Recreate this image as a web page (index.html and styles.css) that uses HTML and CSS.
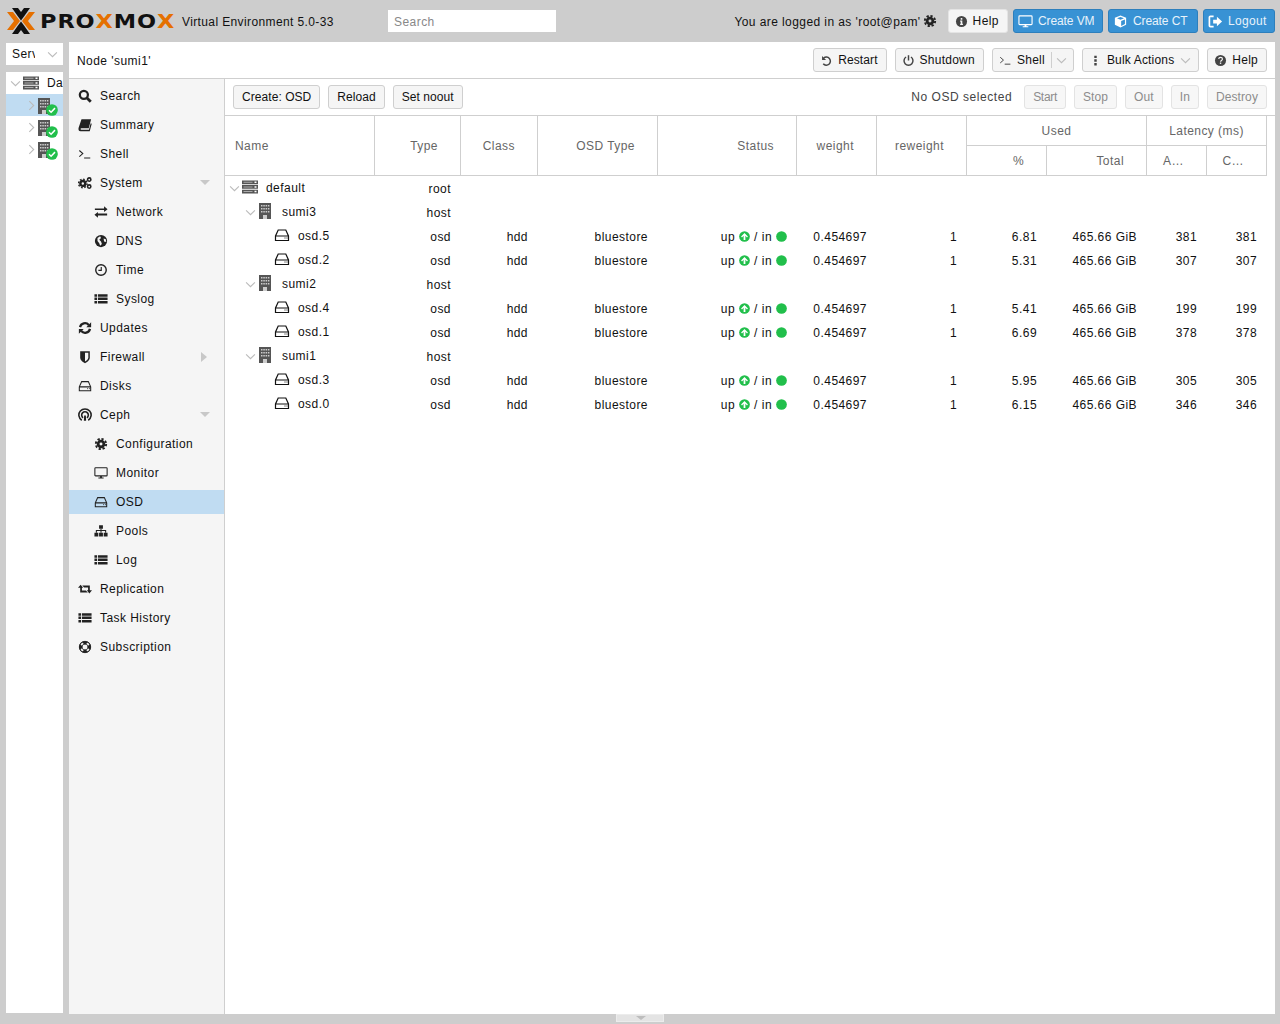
FILE: index.html
```html
<!DOCTYPE html>
<html lang="en">
<head>
  <meta charset="UTF-8">
  <title>sumi1 - Proxmox Virtual Environment</title>
  <link rel="stylesheet" href="styles.css">
</head>
<body>

<svg class="sprite" xmlns="http://www.w3.org/2000/svg">
  <symbol id="i-search" viewBox="0 0 16 16"><circle cx="6.700" cy="6.700" r="4.600" fill="none" stroke="currentColor" stroke-width="2.600"/><path d="M10 10l4.600 4.600" stroke="currentColor" stroke-width="3.200"/></symbol>
  <symbol id="i-book" viewBox="0 0 16 16"><path d="M4 1.500h11l-2.700 10.300H3.800c-1.200 0-1.200 1.700 0 1.700H12.500l2-7.500 1.200.6-2.300 8.400H3c-2.300 0-2.800-2-2.300-4z" fill="currentColor"/></symbol>
  <symbol id="i-term" viewBox="0 0 16 16"><path d="M1.500 4l4 3.500-4 3.500M7 12.500h7" fill="none" stroke="currentColor" stroke-width="1.200"/></symbol>
  <symbol id="i-cogs" viewBox="0 0 16 16"><circle cx="5.500" cy="8.500" r="2.800" fill="none" stroke="currentColor" stroke-width="2.800"/><circle cx="5.500" cy="8.500" r="4.900" fill="none" stroke="currentColor" stroke-width="1.600" stroke-dasharray="2 1.800"/><circle cx="12.800" cy="4" r="1.900" fill="none" stroke="currentColor" stroke-width="1.800"/><circle cx="12.800" cy="12" r="1.900" fill="none" stroke="currentColor" stroke-width="1.800"/></symbol>
  <symbol id="i-exchange" viewBox="0 0 16 16"><path d="M1 4h10.500V1.500l4 3.300-4 3.200V5.800H1zM15 9.800H4.500V8l-4 3.200 4 3.300v-2.600H15z" fill="currentColor"/></symbol>
  <symbol id="i-globe" viewBox="0 0 16 16"><circle cx="8" cy="8" r="7" fill="currentColor"/><path d="M4 4.500l3-2 1 2-2 2 2 2 1 3-2 2-1-3-2-2.500zM11 5l2.500 1 .5 3-2.500-.5z" fill="#f5f5f5"/></symbol>
  <symbol id="i-clock" viewBox="0 0 16 16"><circle cx="8" cy="8" r="6" fill="none" stroke="currentColor" stroke-width="1.600"/><path d="M8.300 4.500v4H5" fill="none" stroke="currentColor" stroke-width="1.300"/></symbol>
  <symbol id="i-list" viewBox="0 0 16 16"><path d="M.5 2.500h3v2.800h-3zM4.500 2.500h11v2.800h-11zM.5 6.400h3v2.800h-3zM4.500 6.400h11v2.800h-11zM.5 10.300h3v2.800h-3zM4.500 10.300h11v2.800h-11z" fill="currentColor"/></symbol>
  <symbol id="i-refresh" viewBox="0 0 16 16"><path d="M2.300 7A5.800 5.800 0 0 1 12.300 4.500M13.700 9A5.800 5.800 0 0 1 3.700 11.500" fill="none" stroke="currentColor" stroke-width="2.600"/><path d="M15 1.500V7H9.500zM1 14.500V9h5.500z" fill="currentColor"/></symbol>
  <symbol id="i-shield" viewBox="0 0 16 16"><path d="M2.500 1.500h11v7c0 3.200-3.200 5.300-5.500 6.500-2.300-1.200-5.500-3.300-5.500-6.500z" fill="currentColor"/><path d="M8 3.200h3.800v5.300c0 2.200-2.200 3.700-3.800 4.600z" fill="#f5f5f5"/></symbol>
  <symbol id="i-hdd" viewBox="0 0 16 16"><path d="M4.200 3h7.600l2.700 6v4.500h-13V9zM1.500 9h13" fill="none" stroke="currentColor" stroke-width="1.200"/><path d="M10.500 11h1M12.500 11h1" stroke="currentColor"/></symbol>
  <symbol id="i-ceph" viewBox="0 0 16 16"><path d="M4.300 14a7 7 0 1 1 7.400 0M5.800 11.200a3.800 3.800 0 1 1 4.400 0" fill="none" stroke="currentColor" stroke-width="1.800"/><path d="M6.700 14.500l.3-6h2l.3 6z" fill="currentColor"/></symbol>
  <symbol id="i-gear" viewBox="0 0 16 16"><circle cx="8" cy="8" r="3.300" fill="none" stroke="currentColor" stroke-width="3.200"/><circle cx="8" cy="8" r="5.900" fill="none" stroke="currentColor" stroke-width="2.200" stroke-dasharray="2.600 2"/></symbol>
  <symbol id="i-desktop" viewBox="0 0 16 16"><rect x="1" y="2" width="14" height="9.300" rx=".8" fill="none" stroke="currentColor" stroke-width="1.200"/><path d="M7 11.500h2v1.700H7zM5 13h6v1.200H5z" fill="currentColor"/></symbol>
  <symbol id="i-sitemap" viewBox="0 0 16 16"><path d="M5.800 1.500h4.400v4H5.800zM.5 10h4.400v4.200H.5zM5.800 10h4.400v4.200H5.800zM11.100 10h4.400v4.200h-4.400z" fill="currentColor"/><path d="M2.700 10V7.500h10.600V10M8 5.500V10" fill="none" stroke="currentColor" stroke-width="1.200"/></symbol>
  <symbol id="i-retweet" viewBox="0 0 16 16"><path d="M0 6.500l3-3.500 3 3.500H4.500v3.200H9l2.200 2.300H2.500V6.500zM16 9.500L13 13l-3-3.500h1.500V6.300H7L4.800 4h8.700v5.500z" fill="currentColor"/></symbol>
  <symbol id="i-life" viewBox="0 0 16 16"><circle cx="8" cy="8" r="5" fill="none" stroke="currentColor" stroke-width="3.800"/><path d="M3.800 3.800l2.500 2.500M12.200 3.800L9.700 6.300M3.800 12.200l2.500-2.500M12.200 12.200L9.700 9.700" stroke="#f5f5f5" stroke-width="3"/><circle cx="8" cy="8" r="6.500" fill="none" stroke="currentColor" stroke-width=".9"/><circle cx="8" cy="8" r="3.400" fill="none" stroke="currentColor" stroke-width=".9"/></symbol>
  <symbol id="i-undo" viewBox="0 0 16 16"><path d="M4.500 5A5 5 0 1 1 4 12" fill="none" stroke="currentColor" stroke-width="1.800"/><path d="M2.500 2.500v5h5z" fill="currentColor"/></symbol>
  <symbol id="i-power" viewBox="0 0 16 16"><path d="M5 3.700a5.500 5.500 0 1 0 6 0" fill="none" stroke="currentColor" stroke-width="1.800"/><path d="M8 1.500v6.500" stroke="currentColor" stroke-width="1.800"/></symbol>
  <symbol id="i-dots" viewBox="0 0 16 16"><path d="M6.500 2h3v3h-3zM6.500 6.500h3v3h-3zM6.500 11h3v3h-3z" fill="currentColor"/></symbol>
  <symbol id="i-question" viewBox="0 0 16 16"><circle cx="8" cy="8" r="6.800" fill="currentColor"/><path d="M5.800 6.300c0-2.800 4.600-2.800 4.600 0 0 1.700-2.300 1.700-2.300 3.200" fill="none" stroke="#f5f5f5" stroke-width="1.400"/><path d="M7.200 10.500h1.700v1.700H7.200z" fill="#f5f5f5"/></symbol>
  <symbol id="i-info" viewBox="0 0 16 16"><circle cx="8" cy="8" r="6.800" fill="currentColor"/><path d="M7 3.700h2v2H7zM6.300 6.800H9v4h.8v1.400H6.300v-1.400H7V8.200h-.7z" fill="#f5f5f5"/></symbol>
  <symbol id="i-cube" viewBox="0 0 16 16"><path d="M8 1.500l6 2.400v7.600l-6 3-6-3V3.900z" fill="currentColor"/><path d="M8 3.100l3.700 1.500L8 6.100 4.300 4.600zM8.700 7.400l4-1.600v4.900l-4 2z" fill="#3892d4"/></symbol>
  <symbol id="i-signout" viewBox="0 0 16 16"><path d="M6 2.500H2.500a1 1 0 0 0-1 1v9a1 1 0 0 0 1 1H6" fill="none" stroke="currentColor" stroke-width="1.800"/><path d="M5.500 6h4V3l5.500 5-5.500 5v-3h-4z" fill="currentColor"/></symbol>
  <symbol id="i-up" viewBox="0 0 16 16"><circle cx="8" cy="8" r="7.800" fill="#21bf4b"/><path d="M8 2.800L13 8l-1.400 1.300-2.300-2.400V13H6.700V6.900L4.400 9.300 3 8z" fill="#fff"/></symbol>
  <symbol id="i-in" viewBox="0 0 16 16"><circle cx="8" cy="8" r="7.800" fill="#21bf4b"/></symbol>
  <symbol id="i-check" viewBox="0 0 16 16"><circle cx="8" cy="8" r="7.800" fill="#21bf4b"/><path d="M4 8.300l2.800 2.700L12 5.500" fill="none" stroke="#fff" stroke-width="2"/></symbol>
  <symbol id="i-server" viewBox="0 0 18 16"><path d="M1 1.500h16v3.700H1zM1 6.100h16v3.700H1zM1 10.700h16v3.700H1z" fill="#555"/><path d="M2.500 2.800h9v1h-9zM2.500 7.400h9v1h-9zM2.500 12h9v1h-9z" fill="#aaa"/><path d="M13.500 2.600h2v1.500h-2zM13.500 7.200h2v1.500h-2zM13.500 11.800h2v1.500h-2z" fill="#fff"/></symbol>
  <symbol id="i-building" viewBox="0 0 14 16"><path d="M1 0h12v16H1z" fill="#555"/><path d="M3 2h1.500v1.500H3zM5.300 2h1.500v1.500H5.300zM7.600 2h1.500v1.500H7.600zM9.900 2h1.500v1.500H9.900zM3 5h1.500v1.500H3zM5.300 5h1.500v1.500H5.300zM7.600 5h1.500v1.500H7.600zM9.900 5h1.500v1.500H9.900zM3 8h1.500v1.500H3zM5.300 8h1.500v1.500H5.300zM7.600 8h1.500v1.500H7.600zM9.900 8h1.500v1.500H9.900zM5 12h4v4H5z" fill="#ccc"/></symbol>
  <symbol id="i-open" viewBox="0 0 10 10"><path d="M1 3l4 4 4-4" fill="none" stroke="#bbb"/></symbol>
  <symbol id="i-closed" viewBox="0 0 10 10"><path d="M3 1l4 4-4 4" fill="none" stroke="#bbb"/></symbol>
</svg>

<header class="topbar">
  <div class="logo">
    <svg class="logo-x" viewBox="0 0 28 26"><path d="M0 4h6l7 9-7 9H0l7-9zM28 4h-6l-7 9 7 9h6l-7-9z" fill="#e57000"/><path d="M5 0h6l3 4 3-4h6l-6 8.500-3 4-3-4zM5 26h6l3-4 3 4h6l-6-8.500-3-4-3 4z" fill="#111"/></svg>
    <span class="logo-text">PRO<b>X</b>MO<b>X</b></span>
  </div>
  <span class="version">Virtual Environment 5.0-33</span>
  <div class="search-box">Search</div>
  <div class="top-right">
    <span class="logged">You are logged in as 'root@pam'</span>
    <svg class="ico gear-top"><use href="#i-gear"/></svg>
    <button class="btn btn-help"><svg class="ico"><use href="#i-info"/></svg>Help</button>
    <button class="btn btn-blue"><svg class="ico"><use href="#i-desktop"/></svg>Create VM</button>
    <button class="btn btn-blue"><svg class="ico"><use href="#i-cube"/></svg>Create CT</button>
    <button class="btn btn-blue btn-logout"><svg class="ico"><use href="#i-signout"/></svg>Logout</button>
  </div>
</header>

<div class="workspace">
  <aside class="left">
    <div class="view-select"><span class="view-label">Server View</span><svg class="chev"><use href="#i-open"/></svg></div>
    <div class="res-tree">
      <div class="res-row res-dc"><svg class="chev"><use href="#i-open"/></svg><svg class="ico-server"><use href="#i-server"/></svg><span>Datacenter</span></div>
      <div class="res-row res-node selected"><svg class="chev"><use href="#i-closed"/></svg><span class="node-ico"><svg class="ico-building"><use href="#i-building"/></svg><svg class="badge"><use href="#i-check"/></svg></span></div>
      <div class="res-row res-node"><svg class="chev"><use href="#i-closed"/></svg><span class="node-ico"><svg class="ico-building"><use href="#i-building"/></svg><svg class="badge"><use href="#i-check"/></svg></span></div>
      <div class="res-row res-node"><svg class="chev"><use href="#i-closed"/></svg><span class="node-ico"><svg class="ico-building"><use href="#i-building"/></svg><svg class="badge"><use href="#i-check"/></svg></span></div>
    </div>
  </aside>

  <main class="main">
    <div class="titlebar">
      <span class="node-title">Node 'sumi1'</span>
      <div class="title-btns">
        <button class="btn btn-restart"><svg class="ico"><use href="#i-undo"/></svg>Restart</button>
        <button class="btn"><svg class="ico"><use href="#i-power"/></svg>Shutdown</button>
        <button class="btn btn-split"><svg class="ico"><use href="#i-term"/></svg>Shell<span class="split"><svg class="chev"><use href="#i-open"/></svg></span></button>
        <button class="btn btn-bulk"><svg class="ico"><use href="#i-dots"/></svg>Bulk Actions<svg class="chev chev-after"><use href="#i-open"/></svg></button>
        <button class="btn"><svg class="ico"><use href="#i-question"/></svg>Help</button>
      </div>
    </div>

    <div class="body">
      <nav class="menu">
        <a class="item"><svg class="ico"><use href="#i-search"/></svg>Search</a>
        <a class="item"><svg class="ico"><use href="#i-book"/></svg>Summary</a>
        <a class="item"><svg class="ico"><use href="#i-term"/></svg>Shell</a>
        <a class="item has-arrow"><svg class="ico"><use href="#i-cogs"/></svg>System<i class="tri-down"></i></a>
        <a class="item sub"><svg class="ico"><use href="#i-exchange"/></svg>Network</a>
        <a class="item sub"><svg class="ico"><use href="#i-globe"/></svg>DNS</a>
        <a class="item sub"><svg class="ico"><use href="#i-clock"/></svg>Time</a>
        <a class="item sub"><svg class="ico"><use href="#i-list"/></svg>Syslog</a>
        <a class="item"><svg class="ico"><use href="#i-refresh"/></svg>Updates</a>
        <a class="item has-arrow"><svg class="ico"><use href="#i-shield"/></svg>Firewall<i class="tri-right"></i></a>
        <a class="item"><svg class="ico"><use href="#i-hdd"/></svg>Disks</a>
        <a class="item has-arrow"><svg class="ico"><use href="#i-ceph"/></svg>Ceph<i class="tri-down"></i></a>
        <a class="item sub"><svg class="ico"><use href="#i-gear"/></svg>Configuration</a>
        <a class="item sub"><svg class="ico"><use href="#i-desktop"/></svg>Monitor</a>
        <a class="item sub active"><svg class="ico"><use href="#i-hdd"/></svg>OSD</a>
        <a class="item sub"><svg class="ico"><use href="#i-sitemap"/></svg>Pools</a>
        <a class="item sub"><svg class="ico"><use href="#i-list"/></svg>Log</a>
        <a class="item"><svg class="ico"><use href="#i-retweet"/></svg>Replication</a>
        <a class="item"><svg class="ico"><use href="#i-list"/></svg>Task History</a>
        <a class="item"><svg class="ico"><use href="#i-life"/></svg>Subscription</a>
      </nav>

      <section class="content">
        <div class="toolbar">
          <button class="btn">Create: OSD</button>
          <button class="btn">Reload</button>
          <button class="btn">Set noout</button>
          <span class="selected-osd">No OSD selected</span>
          <button class="btn off btn-start">Start</button>
          <button class="btn off">Stop</button>
          <button class="btn off">Out</button>
          <button class="btn off">In</button>
          <button class="btn off">Destroy</button>
        </div>

        <table class="grid">
          <colgroup>
            <col class="c-name"><col class="c-type"><col class="c-class"><col class="c-osd"><col class="c-status"><col class="c-weight"><col class="c-rew"><col class="c-pct"><col class="c-total"><col class="c-lat"><col class="c-lat">
          </colgroup>
          <thead>
            <tr>
              <th rowspan="2" class="left-h">Name</th>
              <th rowspan="2">Type</th>
              <th rowspan="2">Class</th>
              <th rowspan="2">OSD Type</th>
              <th rowspan="2">Status</th>
              <th rowspan="2">weight</th>
              <th rowspan="2">reweight</th>
              <th colspan="2" class="group">Used</th>
              <th colspan="2" class="group">Latency (ms)</th>
            </tr>
            <tr>
              <th>%</th>
              <th>Total</th>
              <th>A…</th>
              <th>C…</th>
            </tr>
          </thead>
          <tbody id="osdRows">
            <tr><td class="name lvl0"><svg class="chev"><use href="#i-open"/></svg><svg class="ico-server"><use href="#i-server"/></svg>default</td><td>root</td><td></td><td></td><td></td><td></td><td></td><td></td><td></td><td></td><td></td></tr>
            <tr><td class="name lvl1"><svg class="chev"><use href="#i-open"/></svg><svg class="ico-building"><use href="#i-building"/></svg>sumi3</td><td>host</td><td></td><td></td><td></td><td></td><td></td><td></td><td></td><td></td><td></td></tr>
            <tr><td class="name lvl2"><svg class="ico-hdd"><use href="#i-hdd"/></svg>osd.5</td><td>osd</td><td>hdd</td><td>bluestore</td><td class="status">up <svg class="dot"><use href="#i-up"/></svg> / in <svg class="dot"><use href="#i-in"/></svg></td><td>0.454697</td><td>1</td><td>6.81</td><td>465.66 GiB</td><td>381</td><td>381</td></tr>
            <tr><td class="name lvl2"><svg class="ico-hdd"><use href="#i-hdd"/></svg>osd.2</td><td>osd</td><td>hdd</td><td>bluestore</td><td class="status">up <svg class="dot"><use href="#i-up"/></svg> / in <svg class="dot"><use href="#i-in"/></svg></td><td>0.454697</td><td>1</td><td>5.31</td><td>465.66 GiB</td><td>307</td><td>307</td></tr>
            <tr><td class="name lvl1"><svg class="chev"><use href="#i-open"/></svg><svg class="ico-building"><use href="#i-building"/></svg>sumi2</td><td>host</td><td></td><td></td><td></td><td></td><td></td><td></td><td></td><td></td><td></td></tr>
            <tr><td class="name lvl2"><svg class="ico-hdd"><use href="#i-hdd"/></svg>osd.4</td><td>osd</td><td>hdd</td><td>bluestore</td><td class="status">up <svg class="dot"><use href="#i-up"/></svg> / in <svg class="dot"><use href="#i-in"/></svg></td><td>0.454697</td><td>1</td><td>5.41</td><td>465.66 GiB</td><td>199</td><td>199</td></tr>
            <tr><td class="name lvl2"><svg class="ico-hdd"><use href="#i-hdd"/></svg>osd.1</td><td>osd</td><td>hdd</td><td>bluestore</td><td class="status">up <svg class="dot"><use href="#i-up"/></svg> / in <svg class="dot"><use href="#i-in"/></svg></td><td>0.454697</td><td>1</td><td>6.69</td><td>465.66 GiB</td><td>378</td><td>378</td></tr>
            <tr><td class="name lvl1"><svg class="chev"><use href="#i-open"/></svg><svg class="ico-building"><use href="#i-building"/></svg>sumi1</td><td>host</td><td></td><td></td><td></td><td></td><td></td><td></td><td></td><td></td><td></td></tr>
            <tr><td class="name lvl2"><svg class="ico-hdd"><use href="#i-hdd"/></svg>osd.3</td><td>osd</td><td>hdd</td><td>bluestore</td><td class="status">up <svg class="dot"><use href="#i-up"/></svg> / in <svg class="dot"><use href="#i-in"/></svg></td><td>0.454697</td><td>1</td><td>5.95</td><td>465.66 GiB</td><td>305</td><td>305</td></tr>
            <tr><td class="name lvl2"><svg class="ico-hdd"><use href="#i-hdd"/></svg>osd.0</td><td>osd</td><td>hdd</td><td>bluestore</td><td class="status">up <svg class="dot"><use href="#i-up"/></svg> / in <svg class="dot"><use href="#i-in"/></svg></td><td>0.454697</td><td>1</td><td>6.15</td><td>465.66 GiB</td><td>346</td><td>346</td></tr>
          </tbody>
        </table>
      </section>
    </div>
  </main>
</div>

<div class="collapse-handle"><i class="tri-handle"></i></div>

</body>
</html>
```

FILE: styles.css
```css
html, body {
  margin: 0;
  height: 1024px;
  overflow: hidden;
}
body {
  font-family: "Liberation Sans", Arial, sans-serif;
  font-size: 12px;
  letter-spacing: 0.45px;
  color: #111;
  background: #cdcdcd;
  position: relative;
}
.sprite {
  display: none;
}
button {
  font: inherit;
}

/* top bar */
.topbar {
  height: 42px;
  display: flex;
  align-items: center;
  padding: 0 5px 0 7px;
  box-sizing: border-box;
}
.logo {
  display: flex;
  align-items: center;
  width: 175px;
  flex: none;
}
.logo-x {
  width: 28px;
  height: 26px;
  flex: none;
}
.logo-text {
  margin-left: 5px;
  font-family: "DejaVu Sans", sans-serif;
  font-weight: 700;
  font-size: 19px;
  letter-spacing: 0.8px;
  color: #111;
  white-space: nowrap;
  transform: scaleX(1.18);
  transform-origin: left center;
}
.logo-text b {
  color: #e57000;
}
.version {
  width: 206px;
  flex: none;
  margin-top: 2px;
  letter-spacing: 0.38px;
}
.search-box {
  width: 162px;
  height: 22px;
  line-height: 24px;
  padding-left: 6px;
  background: #fff;
  color: #888;
  flex: none;
}
.top-right {
  margin-left: auto;
  display: flex;
  align-items: center;
  gap: 5px;
}
.logged {
  margin-right: -3px;
  margin-top: 2px;
  letter-spacing: 0.42px;
}
.gear-top {
  margin: 0 6px 0 0;
}

/* buttons */
.btn {
  height: 24px;
  padding: 0 8px;
  border: 1px solid #cfcfcf;
  border-radius: 3px;
  background: #f5f5f5;
  color: #111;
  display: inline-flex;
  align-items: center;
  box-sizing: border-box;
  white-space: nowrap;
  letter-spacing: 0.25px;
}
.btn .ico {
  width: 13px;
  height: 13px;
  margin: 0 5px 0 -2px;
  color: #444;
}
.btn-help {
  background: #f5f5f5;
  border-color: #e4e4e4;
  letter-spacing: 0.45px;
}
.btn-blue {
  width: 90px;
  padding: 0 0 0 4px;
  background: #3892d4;
  border-color: #2d7fbc;
  color: #e8f3fb;
  letter-spacing: -0.1px;
}
.btn-logout {
  width: 72px;
  letter-spacing: 0.35px;
}
.btn-blue .ico {
  width: 15px;
  height: 15px;
  margin: 0 5px 0 0;
  color: #fff;
}
.btn.off {
  color: #8c8c8c;
  border-color: #e3e3e3;
  background: #f7f7f7;
  letter-spacing: 0.1px;
}
.btn.btn-start {
  letter-spacing: -0.3px;
}
.btn-restart {
  letter-spacing: 0.1px;
}
.btn-bulk {
  padding-right: 7px;
  letter-spacing: 0.17px;
}
.toolbar .btn:not(.off) {
  letter-spacing: 0.06px;
}
.ico {
  width: 14px;
  height: 14px;
  flex: none;
  color: #222;
}
.chev {
  width: 11px;
  height: 11px;
  flex: none;
}
.chev-after {
  margin-left: 6px;
}
.btn-split {
  padding-right: 6px;
}
.split {
  margin-left: 6px;
  padding-left: 4px;
  border-left: 1px solid #cfcfcf;
  display: inline-flex;
  height: 16px;
  align-items: center;
}

/* left resource tree */
.workspace {
  display: flex;
  height: 972px;
  padding-left: 6px;
}
.left {
  width: 57px;
  flex: none;
  display: flex;
  flex-direction: column;
  gap: 7px;
  margin-right: 6px;
  padding-top: 1px;
  height: 971px;
  box-sizing: border-box;
}
.view-select {
  height: 22px;
  background: #fff;
  display: flex;
  align-items: center;
  padding: 0 6px;
  box-sizing: border-box;
  gap: 12px;
  flex: none;
}
.view-label {
  width: 23px;
  overflow: hidden;
  white-space: nowrap;
  flex: none;
}
.res-tree {
  flex: 1;
  background: #fff;
  overflow: hidden;
}
.res-row {
  height: 22px;
  display: flex;
  align-items: center;
  white-space: nowrap;
}
.res-row.selected {
  background: #c0dcf2;
}
.res-dc {
  padding-left: 4px;
}
.res-dc .ico-server {
  margin: 0 7px 0 1px;
}
.res-node {
  padding-left: 20px;
}
.ico-server {
  width: 18px;
  height: 16px;
  flex: none;
}
.ico-building {
  width: 14px;
  height: 16px;
  flex: none;
}
.ico-hdd {
  width: 16px;
  height: 16px;
  flex: none;
}
.node-ico {
  position: relative;
  display: inline-flex;
  margin-top: 1px;
}
.badge {
  position: absolute;
  left: 9px;
  top: 6px;
  width: 12px;
  height: 12px;
}

/* main panel */
.main {
  width: 1206px;
  height: 972px;
  background: #fff;
  display: flex;
  flex-direction: column;
  flex: none;
}
.titlebar {
  height: 37px;
  flex: none;
  box-sizing: border-box;
  border-bottom: 1px solid #cfcfcf;
  display: flex;
  align-items: center;
  padding: 0 8px;
}
.node-title {
  margin-top: 2px;
}
.title-btns {
  margin-left: auto;
  display: flex;
  gap: 8px;
}
.body {
  flex: 1;
  display: flex;
  min-height: 0;
}

/* side menu */
.menu {
  width: 156px;
  flex: none;
  box-sizing: border-box;
  background: #f5f5f5;
  border-right: 1px solid #cfcfcf;
  padding-top: 5px;
  display: flex;
  flex-direction: column;
  gap: 5px;
}
.item {
  height: 24px;
  display: flex;
  align-items: center;
  padding-left: 9px;
  box-sizing: border-box;
  position: relative;
}
.item .ico {
  margin-right: 8px;
}
.item.sub {
  padding-left: 25px;
}
.item.active {
  background: #c0dcf2;
}
.tri-down, .tri-right {
  position: absolute;
  width: 0;
  height: 0;
  top: 9px;
}
.tri-down {
  left: 131px;
  border-left: 5px solid transparent;
  border-right: 5px solid transparent;
  border-top: 5px solid #c8c8c8;
}
.tri-right {
  left: 132px;
  top: 7px;
  border-top: 5px solid transparent;
  border-bottom: 5px solid transparent;
  border-left: 6px solid #c8c8c8;
}

/* OSD grid */
.content {
  flex: 1;
  min-width: 0;
}
.toolbar {
  height: 37px;
  box-sizing: border-box;
  border-bottom: 1px solid #cfcfcf;
  display: flex;
  align-items: center;
  gap: 8px;
  padding: 0 8px;
}
.selected-osd {
  margin-left: auto;
  margin-right: 4px;
  color: #444;
  letter-spacing: 0.55px;
}
.grid {
  width: 1042px;
  table-layout: fixed;
  border-collapse: separate;
  border-spacing: 0;
}
.c-name { width: 150px; }
.c-type { width: 86px; }
.c-class { width: 77px; }
.c-osd { width: 120px; }
.c-status { width: 139px; }
.c-weight { width: 80px; }
.c-rew { width: 90px; }
.c-pct { width: 80px; }
.c-total { width: 100px; }
.c-lat { width: 60px; }
.grid th {
  height: 30px;
  padding: 0 22px 0 0;
  box-sizing: border-box;
  border-right: 1px solid #cfcfcf;
  border-bottom: 1px solid #cfcfcf;
  font-weight: 400;
  color: #666;
  text-align: right;
  white-space: nowrap;
}
.grid th.left-h {
  text-align: left;
  padding-left: 10px;
}
.grid th.group {
  text-align: center;
  padding: 0;
}
.grid td {
  height: 24px;
  box-sizing: border-box;
  padding: 2px 10px 0 0;
  text-align: right;
  white-space: nowrap;
}
.grid td.status {
  letter-spacing: 0.55px;
}
.grid td.name {
  text-align: left;
  padding: 0 0 2px 0;
}
.name .chev {
  vertical-align: -2px;
}
.name svg {
  vertical-align: -3px;
}
.lvl0 {
  padding-left: 4px !important;
}
.lvl0 .ico-server {
  margin: 0 7px 0 1px;
}
.lvl1 {
  padding-left: 20px !important;
}
.lvl1 .ico-building {
  margin: 0 10px 0 2px;
}
.lvl2 {
  padding-left: 49px !important;
}
.lvl2 .ico-hdd {
  margin-right: 8px;
}
.dot {
  width: 11px;
  height: 11px;
  vertical-align: -1px;
}

/* bottom collapse tab */
.collapse-handle {
  position: absolute;
  left: 616px;
  top: 1014px;
  width: 48px;
  height: 8px;
  background: #e4e4e4;
  border: 1px solid #ececec;
  box-sizing: border-box;
}
.tri-handle {
  position: absolute;
  left: 19px;
  top: 1px;
  border-left: 5px solid transparent;
  border-right: 5px solid transparent;
  border-top: 4px solid #bdbdbd;
}
```
